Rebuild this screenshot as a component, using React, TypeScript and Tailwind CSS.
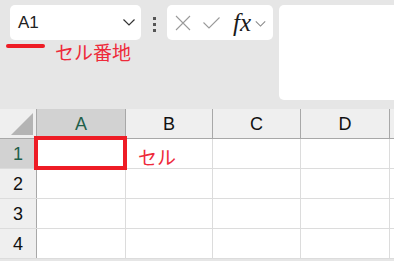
import React from 'react'

const cols = [
  { label: 'A', w: 'w-[89px]', sel: true },
  { label: 'B', w: 'w-[87px]', sel: false },
  { label: 'C', w: 'w-[88px]', sel: false },
  { label: 'D', w: 'w-[89px]', sel: false },
]

const rows = [1, 2, 3, 4]

function Chevron({ className }: { className?: string }) {
  return (
    <svg viewBox="0 0 12 7" className={className} fill="none" stroke="currentColor" strokeWidth="1.2">
      <path d="M0.5 0.5 L6 6 L11.5 0.5" />
    </svg>
  )
}

export default function App() {
  return (
    <div
      className="relative w-[394px] h-[261px] overflow-hidden bg-[#e6e6e6]"
      style={{ fontFamily: '"Liberation Sans", "Noto Sans CJK JP", sans-serif' }}
    >
      {/* formula bar area */}
      <div className="flex h-[109px] pt-[5px] pl-[10px]">
        <div className="flex items-center w-[131px] h-[35px] bg-white rounded-[5px] pl-[8px] pr-[6px]">
          <span className="text-[17px] leading-none text-[#222]">A1</span>
          <Chevron className="ml-auto w-[12px] h-[7px] text-[#333]" />
        </div>

        <div className="flex flex-col gap-[3px] w-[26px] items-center pt-[12px]">
          <span className="w-[3px] h-[3px] bg-[#555]" />
          <span className="w-[3px] h-[3px] bg-[#555]" />
          <span className="w-[3px] h-[3px] bg-[#555]" />
        </div>

        <div className="flex items-center w-[106px] h-[35px] bg-white rounded-[5px] pl-[8px]">
          <svg viewBox="0 0 16 16" className="w-[16px] h-[16px] text-[#9a9a9a]" fill="none" stroke="currentColor" strokeWidth="1.1">
            <path d="M1 1 L15 15 M15 1 L1 15" />
          </svg>
          <svg viewBox="0 0 17 12" className="ml-[12px] w-[17px] h-[12px] text-[#9a9a9a]" fill="none" stroke="currentColor" strokeWidth="1.1">
            <path d="M0.5 5.5 L6 11 L16.5 0.5" />
          </svg>
          <span
            className="ml-[13px] text-[25px] leading-none italic text-[#1a1a1a]"
            style={{ fontFamily: '"Liberation Serif", serif' }}
          >
            fx
          </span>
          <Chevron className="ml-[4px] mt-[2px] w-[11px] h-[6px] text-[#888]" />
        </div>

        <div className="ml-[6px] flex-1 h-[95px] bg-white rounded-l-[5px]" />
      </div>

      {/* column header row */}
      <div className="flex h-[30px] bg-[#efefef] border-b border-[#a8a8a8]">
        <div className="relative w-[37px] border-r border-[#a8a8a8]">
          <svg viewBox="0 0 22 22" className="absolute left-[11px] top-[4px] w-[22px] h-[22px]">
            <path d="M22 0 L22 22 L0 22 Z" fill="#b4b4b4" />
          </svg>
        </div>
        {cols.map((c) => (
          <div
            key={c.label}
            className={`${c.w} flex items-center justify-center border-r border-[#a8a8a8] text-[18px] leading-none ${
              c.sel ? 'bg-[#d2d2d2] text-[#1f5f4a]' : 'text-[#111]'
            }`}
          >
            {c.label}
          </div>
        ))}
        <div className="flex-1" />
      </div>

      {/* rows */}
      {rows.map((r) => (
        <div key={r} className="flex h-[30px] bg-white border-b border-[#dcdcdc]">
          <div
            className={`w-[37px] flex items-center justify-center border-r border-[#a8a8a8] text-[18px] leading-none ${
              r === 1 ? 'bg-[#d2d2d2] text-[#1f5f4a]' : 'bg-[#efefef] text-[#111]'
            }`}
          >
            {r}
          </div>
          {cols.map((c) => (
            <div key={c.label} className={`${c.w} border-r border-[#dcdcdc]`} />
          ))}
          <div className="flex-1" />
        </div>
      ))}

      {/* annotations */}
      <div className="absolute left-[6px] top-[44px] w-[39px] h-[4px] rounded-full bg-[#ee1c25]" />
      <span
        className="absolute left-[55px] top-[39px] text-[19px] leading-[26px] text-[#ee2a3a]"
        style={{ fontFamily: '"Noto Sans CJK JP", sans-serif' }}
      >
        セル番地
      </span>
      <div className="absolute left-[34px] top-[136px] w-[93px] h-[34px] border-[4px] border-[#ee1c25]" />
      <span
        className="absolute left-[138px] top-[144px] text-[19px] leading-[26px] text-[#ee2a3a]"
        style={{ fontFamily: '"Noto Sans CJK JP", sans-serif' }}
      >
        セル
      </span>
    </div>
  )
}
